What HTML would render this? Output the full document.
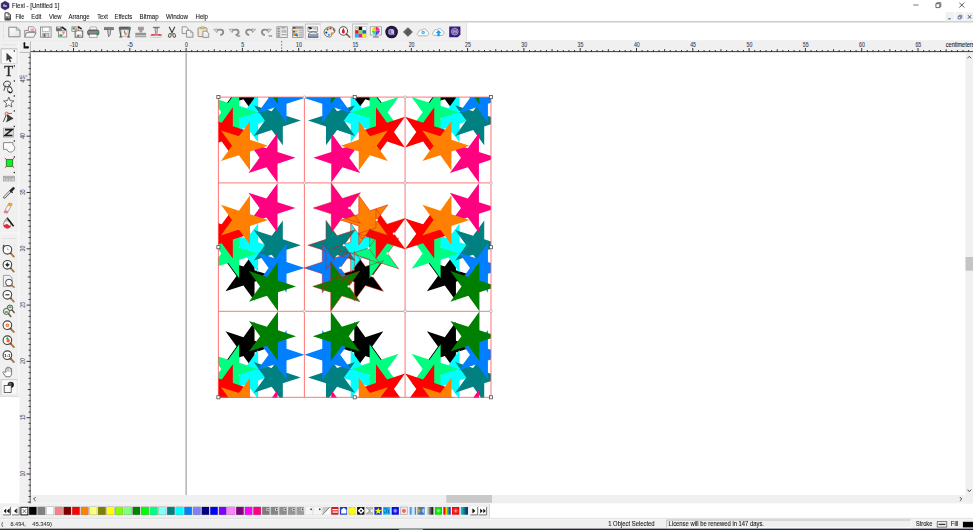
<!DOCTYPE html>
<html><head><meta charset="utf-8"><title>Flexi - [Untitled 1]</title>
<style>html,body{margin:0;padding:0;background:#fff;overflow:hidden;font-family:"Liberation Sans",sans-serif}svg{display:block}</style>
</head><body>
<svg width="973" height="530" viewBox="0 0 973 530" font-family="Liberation Sans, sans-serif">
<rect x="0.00" y="0.00" width="973.00" height="530.00" fill="#ffffff" />
<rect x="0.00" y="22.40" width="466.70" height="18.40" fill="#f0f0f0" />
<rect x="0.00" y="20.90" width="973.00" height="1.70" fill="#d9d9d9" />
<line x1="0.00" y1="21.70" x2="973.00" y2="21.70" stroke="#cbcbcb" stroke-width="0.8" />
<line x1="0.00" y1="40.90" x2="973.00" y2="40.90" stroke="#e3e3e3" stroke-width="0.8" />
<line x1="466.70" y1="22.50" x2="466.70" y2="40.50" stroke="#dcdcdc" stroke-width="0.8" />
<rect x="0.00" y="41.00" width="19.50" height="355.50" fill="#f0f0f0" />
<line x1="0.00" y1="396.50" x2="19.50" y2="396.50" stroke="#d8d8d8" stroke-width="0.8" />
<rect x="19.50" y="41.00" width="953.50" height="11.60" fill="#f0f0f0" />
<rect x="19.50" y="41.00" width="11.00" height="462.30" fill="#f0f0f0" />
<rect x="965.50" y="52.60" width="7.50" height="450.80" fill="#f0f0f0" />
<rect x="30.50" y="495.00" width="942.50" height="8.40" fill="#f0f0f0" />
<rect x="965.50" y="257.00" width="7.50" height="13.70" fill="#c4c4c4" />
<rect x="446.30" y="495.00" width="45.70" height="7.80" fill="#c9c9c9" />
<rect x="0.00" y="503.40" width="489.50" height="14.80" fill="#f0f0f0" />
<line x1="489.50" y1="504.00" x2="489.50" y2="518.00" stroke="#cfcfcf" stroke-width="0.8" />
<rect x="0.00" y="518.40" width="973.00" height="10.40" fill="#f0f0f0" />
<line x1="0.00" y1="518.40" x2="973.00" y2="518.40" stroke="#d9d9d9" stroke-width="0.8" />
<line x1="0.00" y1="519.30" x2="973.00" y2="519.30" stroke="#f6f6f6" stroke-width="0.8" />
<linearGradient id="tb" x1="0" x2="1" y1="0" y2="0"><stop offset="0" stop-color="#2c3a34"/><stop offset="0.5" stop-color="#1c2e38"/><stop offset="1" stop-color="#1a2440"/></linearGradient>
<rect x="0.00" y="528.60" width="973.00" height="1.40" fill="url(#tb)" />
<rect x="399.00" y="529.10" width="24.00" height="0.90" fill="#aab0b6" />
<line x1="30.30" y1="51.60" x2="973.00" y2="51.60" stroke="#404040" stroke-width="1.0" />
<path d="M34.09 52.0v-2.0 M39.72 52.0v-2.0 M45.35 52.0v-2.8 M50.98 52.0v-2.0 M56.61 52.0v-2.0 M62.24 52.0v-2.0 M67.87 52.0v-2.0 M73.50 52.0v-4.0 M79.13 52.0v-2.0 M84.76 52.0v-2.0 M90.39 52.0v-2.0 M96.02 52.0v-2.0 M101.65 52.0v-2.8 M107.28 52.0v-2.0 M112.91 52.0v-2.0 M118.54 52.0v-2.0 M124.17 52.0v-2.0 M129.80 52.0v-4.0 M135.43 52.0v-2.0 M141.06 52.0v-2.0 M146.69 52.0v-2.0 M152.32 52.0v-2.0 M157.95 52.0v-2.8 M163.58 52.0v-2.0 M169.21 52.0v-2.0 M174.84 52.0v-2.0 M180.47 52.0v-2.0 M186.10 52.0v-4.0 M191.73 52.0v-2.0 M197.36 52.0v-2.0 M202.99 52.0v-2.0 M208.62 52.0v-2.0 M214.25 52.0v-2.8 M219.88 52.0v-2.0 M225.51 52.0v-2.0 M231.14 52.0v-2.0 M236.77 52.0v-2.0 M242.40 52.0v-4.0 M248.03 52.0v-2.0 M253.66 52.0v-2.0 M259.29 52.0v-2.0 M264.92 52.0v-2.0 M270.55 52.0v-2.8 M276.18 52.0v-2.0 M281.81 52.0v-2.0 M287.44 52.0v-2.0 M293.07 52.0v-2.0 M298.70 52.0v-4.0 M304.33 52.0v-2.0 M309.96 52.0v-2.0 M315.59 52.0v-2.0 M321.22 52.0v-2.0 M326.85 52.0v-2.8 M332.48 52.0v-2.0 M338.11 52.0v-2.0 M343.74 52.0v-2.0 M349.37 52.0v-2.0 M355.00 52.0v-4.0 M360.63 52.0v-2.0 M366.26 52.0v-2.0 M371.89 52.0v-2.0 M377.52 52.0v-2.0 M383.15 52.0v-2.8 M388.78 52.0v-2.0 M394.41 52.0v-2.0 M400.04 52.0v-2.0 M405.67 52.0v-2.0 M411.30 52.0v-4.0 M416.93 52.0v-2.0 M422.56 52.0v-2.0 M428.19 52.0v-2.0 M433.82 52.0v-2.0 M439.45 52.0v-2.8 M445.08 52.0v-2.0 M450.71 52.0v-2.0 M456.34 52.0v-2.0 M461.97 52.0v-2.0 M467.60 52.0v-4.0 M473.23 52.0v-2.0 M478.86 52.0v-2.0 M484.49 52.0v-2.0 M490.12 52.0v-2.0 M495.75 52.0v-2.8 M501.38 52.0v-2.0 M507.01 52.0v-2.0 M512.64 52.0v-2.0 M518.27 52.0v-2.0 M523.90 52.0v-4.0 M529.53 52.0v-2.0 M535.16 52.0v-2.0 M540.79 52.0v-2.0 M546.42 52.0v-2.0 M552.05 52.0v-2.8 M557.68 52.0v-2.0 M563.31 52.0v-2.0 M568.94 52.0v-2.0 M574.57 52.0v-2.0 M580.20 52.0v-4.0 M585.83 52.0v-2.0 M591.46 52.0v-2.0 M597.09 52.0v-2.0 M602.72 52.0v-2.0 M608.35 52.0v-2.8 M613.98 52.0v-2.0 M619.61 52.0v-2.0 M625.24 52.0v-2.0 M630.87 52.0v-2.0 M636.50 52.0v-4.0 M642.13 52.0v-2.0 M647.76 52.0v-2.0 M653.39 52.0v-2.0 M659.02 52.0v-2.0 M664.65 52.0v-2.8 M670.28 52.0v-2.0 M675.91 52.0v-2.0 M681.54 52.0v-2.0 M687.17 52.0v-2.0 M692.80 52.0v-4.0 M698.43 52.0v-2.0 M704.06 52.0v-2.0 M709.69 52.0v-2.0 M715.32 52.0v-2.0 M720.95 52.0v-2.8 M726.58 52.0v-2.0 M732.21 52.0v-2.0 M737.84 52.0v-2.0 M743.47 52.0v-2.0 M749.10 52.0v-4.0 M754.73 52.0v-2.0 M760.36 52.0v-2.0 M765.99 52.0v-2.0 M771.62 52.0v-2.0 M777.25 52.0v-2.8 M782.88 52.0v-2.0 M788.51 52.0v-2.0 M794.14 52.0v-2.0 M799.77 52.0v-2.0 M805.40 52.0v-4.0 M811.03 52.0v-2.0 M816.66 52.0v-2.0 M822.29 52.0v-2.0 M827.92 52.0v-2.0 M833.55 52.0v-2.8 M839.18 52.0v-2.0 M844.81 52.0v-2.0 M850.44 52.0v-2.0 M856.07 52.0v-2.0 M861.70 52.0v-4.0 M867.33 52.0v-2.0 M872.96 52.0v-2.0 M878.59 52.0v-2.0 M884.22 52.0v-2.0 M889.85 52.0v-2.8 M895.48 52.0v-2.0 M901.11 52.0v-2.0 M906.74 52.0v-2.0 M912.37 52.0v-2.0 M918.00 52.0v-4.0 M923.63 52.0v-2.0 M929.26 52.0v-2.0 M934.89 52.0v-2.0 M940.52 52.0v-2.0 M946.15 52.0v-2.8 M951.78 52.0v-2.0 M957.41 52.0v-2.0 M963.04 52.0v-2.0 M968.67 52.0v-2.0" stroke="#2c2c2c" stroke-width="0.95" fill="none"/>
<text x="69.80" y="47.00" font-size="6.8" fill="#3b4058" stroke="#3b4058" stroke-width="0.1" text-anchor="start" textLength="8.00" lengthAdjust="spacingAndGlyphs" >-10</text>
<text x="127.20" y="47.00" font-size="6.8" fill="#3b4058" stroke="#3b4058" stroke-width="0.1" text-anchor="start" textLength="5.80" lengthAdjust="spacingAndGlyphs" >-5</text>
<text x="184.95" y="47.00" font-size="6.8" fill="#3b4058" stroke="#3b4058" stroke-width="0.1" text-anchor="start" textLength="2.90" lengthAdjust="spacingAndGlyphs" >0</text>
<text x="241.25" y="47.00" font-size="6.8" fill="#3b4058" stroke="#3b4058" stroke-width="0.1" text-anchor="start" textLength="2.90" lengthAdjust="spacingAndGlyphs" >5</text>
<text x="296.10" y="47.00" font-size="6.8" fill="#3b4058" stroke="#3b4058" stroke-width="0.1" text-anchor="start" textLength="5.80" lengthAdjust="spacingAndGlyphs" >10</text>
<text x="352.40" y="47.00" font-size="6.8" fill="#3b4058" stroke="#3b4058" stroke-width="0.1" text-anchor="start" textLength="5.80" lengthAdjust="spacingAndGlyphs" >15</text>
<text x="408.70" y="47.00" font-size="6.8" fill="#3b4058" stroke="#3b4058" stroke-width="0.1" text-anchor="start" textLength="5.80" lengthAdjust="spacingAndGlyphs" >20</text>
<text x="465.00" y="47.00" font-size="6.8" fill="#3b4058" stroke="#3b4058" stroke-width="0.1" text-anchor="start" textLength="5.80" lengthAdjust="spacingAndGlyphs" >25</text>
<text x="521.30" y="47.00" font-size="6.8" fill="#3b4058" stroke="#3b4058" stroke-width="0.1" text-anchor="start" textLength="5.80" lengthAdjust="spacingAndGlyphs" >30</text>
<text x="577.60" y="47.00" font-size="6.8" fill="#3b4058" stroke="#3b4058" stroke-width="0.1" text-anchor="start" textLength="5.80" lengthAdjust="spacingAndGlyphs" >35</text>
<text x="633.90" y="47.00" font-size="6.8" fill="#3b4058" stroke="#3b4058" stroke-width="0.1" text-anchor="start" textLength="5.80" lengthAdjust="spacingAndGlyphs" >40</text>
<text x="690.20" y="47.00" font-size="6.8" fill="#3b4058" stroke="#3b4058" stroke-width="0.1" text-anchor="start" textLength="5.80" lengthAdjust="spacingAndGlyphs" >45</text>
<text x="746.50" y="47.00" font-size="6.8" fill="#3b4058" stroke="#3b4058" stroke-width="0.1" text-anchor="start" textLength="5.80" lengthAdjust="spacingAndGlyphs" >50</text>
<text x="802.80" y="47.00" font-size="6.8" fill="#3b4058" stroke="#3b4058" stroke-width="0.1" text-anchor="start" textLength="5.80" lengthAdjust="spacingAndGlyphs" >55</text>
<text x="859.10" y="47.00" font-size="6.8" fill="#3b4058" stroke="#3b4058" stroke-width="0.1" text-anchor="start" textLength="5.80" lengthAdjust="spacingAndGlyphs" >60</text>
<text x="915.40" y="47.00" font-size="6.8" fill="#3b4058" stroke="#3b4058" stroke-width="0.1" text-anchor="start" textLength="5.80" lengthAdjust="spacingAndGlyphs" >65</text>
<text x="945.80" y="47.00" font-size="6.5" fill="#222" stroke="#222" stroke-width="0.1" text-anchor="start" textLength="28.60" lengthAdjust="spacingAndGlyphs" >centimeters</text>
<line x1="30.20" y1="52.60" x2="30.20" y2="503.40" stroke="#3a3a3a" stroke-width="0.8" />
<path d="M30.6 502.15h-2.8 M30.6 496.52h-2.0 M30.6 490.89h-2.0 M30.6 485.26h-2.0 M30.6 479.63h-2.0 M30.6 474.00h-4.0 M30.6 468.37h-2.0 M30.6 462.74h-2.0 M30.6 457.11h-2.0 M30.6 451.48h-2.0 M30.6 445.85h-2.8 M30.6 440.22h-2.0 M30.6 434.59h-2.0 M30.6 428.96h-2.0 M30.6 423.33h-2.0 M30.6 417.70h-4.0 M30.6 412.07h-2.0 M30.6 406.44h-2.0 M30.6 400.81h-2.0 M30.6 395.18h-2.0 M30.6 389.55h-2.8 M30.6 383.92h-2.0 M30.6 378.29h-2.0 M30.6 372.66h-2.0 M30.6 367.03h-2.0 M30.6 361.40h-4.0 M30.6 355.77h-2.0 M30.6 350.14h-2.0 M30.6 344.51h-2.0 M30.6 338.88h-2.0 M30.6 333.25h-2.8 M30.6 327.62h-2.0 M30.6 321.99h-2.0 M30.6 316.36h-2.0 M30.6 310.73h-2.0 M30.6 305.10h-4.0 M30.6 299.47h-2.0 M30.6 293.84h-2.0 M30.6 288.21h-2.0 M30.6 282.58h-2.0 M30.6 276.95h-2.8 M30.6 271.32h-2.0 M30.6 265.69h-2.0 M30.6 260.06h-2.0 M30.6 254.43h-2.0 M30.6 248.80h-4.0 M30.6 243.17h-2.0 M30.6 237.54h-2.0 M30.6 231.91h-2.0 M30.6 226.28h-2.0 M30.6 220.65h-2.8 M30.6 215.02h-2.0 M30.6 209.39h-2.0 M30.6 203.76h-2.0 M30.6 198.13h-2.0 M30.6 192.50h-4.0 M30.6 186.87h-2.0 M30.6 181.24h-2.0 M30.6 175.61h-2.0 M30.6 169.98h-2.0 M30.6 164.35h-2.8 M30.6 158.72h-2.0 M30.6 153.09h-2.0 M30.6 147.46h-2.0 M30.6 141.83h-2.0 M30.6 136.20h-4.0 M30.6 130.57h-2.0 M30.6 124.94h-2.0 M30.6 119.31h-2.0 M30.6 113.68h-2.0 M30.6 108.05h-2.8 M30.6 102.42h-2.0 M30.6 96.79h-2.0 M30.6 91.16h-2.0 M30.6 85.53h-2.0 M30.6 79.90h-4.0 M30.6 74.27h-2.0 M30.6 68.64h-2.0 M30.6 63.01h-2.0 M30.6 57.38h-2.0" stroke="#2c2c2c" stroke-width="0.95" fill="none"/>
<text transform="translate(25.0 473.70) rotate(-90)" font-size="6.8" fill="#3b4058" text-anchor="middle" textLength="5.8" lengthAdjust="spacingAndGlyphs">10</text>
<text transform="translate(25.0 417.40) rotate(-90)" font-size="6.8" fill="#3b4058" text-anchor="middle" textLength="5.8" lengthAdjust="spacingAndGlyphs">15</text>
<text transform="translate(25.0 361.10) rotate(-90)" font-size="6.8" fill="#3b4058" text-anchor="middle" textLength="5.8" lengthAdjust="spacingAndGlyphs">20</text>
<text transform="translate(25.0 304.80) rotate(-90)" font-size="6.8" fill="#3b4058" text-anchor="middle" textLength="5.8" lengthAdjust="spacingAndGlyphs">25</text>
<text transform="translate(25.0 248.50) rotate(-90)" font-size="6.8" fill="#3b4058" text-anchor="middle" textLength="5.8" lengthAdjust="spacingAndGlyphs">30</text>
<text transform="translate(25.0 192.20) rotate(-90)" font-size="6.8" fill="#3b4058" text-anchor="middle" textLength="5.8" lengthAdjust="spacingAndGlyphs">35</text>
<text transform="translate(25.0 135.90) rotate(-90)" font-size="6.8" fill="#3b4058" text-anchor="middle" textLength="5.8" lengthAdjust="spacingAndGlyphs">40</text>
<text transform="translate(25.0 79.60) rotate(-90)" font-size="6.8" fill="#3b4058" text-anchor="middle" textLength="5.8" lengthAdjust="spacingAndGlyphs">45</text>
<line x1="19.80" y1="52.40" x2="30.50" y2="52.40" stroke="#a0a0a0" stroke-width="0.7" />
<line x1="30.40" y1="41.50" x2="30.40" y2="52.40" stroke="#a0a0a0" stroke-width="0.7" />
<path d="M23.6 42.8h1.6v3.4h3.2v2.3h-4.8z" fill="#111"/>
<path d="M24.4 41.9l1.3 1.5h-2.6z M29.2 47.3l-1.5 1.3v-2.6z" fill="#111"/>
<line x1="186.10" y1="52.60" x2="186.10" y2="495.00" stroke="#8e8e8e" stroke-width="1.0" />
<path d="M967.4 58.25L969.3 56.349999999999994L971.1999999999999 58.25" stroke="#3a3a3a" stroke-width="0.95" fill="none"/>
<path d="M967.4 489.65000000000003L969.3 491.55L971.1999999999999 489.65000000000003" stroke="#3a3a3a" stroke-width="0.95" fill="none"/>
<path d="M35.550000000000004 497.1L33.65 499L35.550000000000004 500.9" stroke="#3a3a3a" stroke-width="0.95" fill="none"/>
<path d="M959.8499999999999 497.1L961.75 499L959.8499999999999 500.9" stroke="#3a3a3a" stroke-width="0.95" fill="none"/>
<path d="M281.7 41.4V51.4" stroke="#222" stroke-width="0.9" stroke-dasharray="1 2.1" fill="none"/>
<path d="M19.6 76H27.4" stroke="#333" stroke-width="0.9" stroke-dasharray="0.85 0.85" fill="none"/>
<defs>
<clipPath id="ct"><rect x="304.4" y="182.9" width="100.70000000000005" height="128.4"/></clipPath>
<clipPath id="ca"><rect x="218.4" y="97.1" width="272.6" height="300.20000000000005"/></clipPath>
<g id="tile" clip-path="url(#ct)" shape-rendering="geometricPrecision">
<polygon points="372.23,276.00 383.33,260.72 365.37,266.55 354.27,251.27 354.27,270.16 336.30,276.00 354.27,281.84 354.27,300.73 365.37,285.45 383.33,291.28" fill="#000000"/>
<polygon points="368.63,248.00 379.73,232.72 361.77,238.55 350.67,223.27 350.67,242.16 332.70,248.00 350.67,253.84 350.67,272.73 361.77,257.45 379.73,263.28" fill="#00ffff"/>
<polygon points="343.93,245.20 355.03,229.92 337.07,235.75 325.97,220.47 325.97,239.36 308.00,245.20 325.97,251.04 325.97,269.93 337.07,254.65 355.03,260.48" fill="#008080"/>
<polygon points="349.23,208.00 360.33,192.72 342.37,198.55 331.27,183.27 331.27,202.16 313.30,208.00 331.27,213.84 331.27,232.73 342.37,217.45 360.33,223.28" fill="#ff0080"/>
<polygon points="387.53,253.50 398.63,238.22 380.67,244.05 369.57,228.77 369.57,247.66 351.60,253.50 369.57,259.34 369.57,278.23 380.67,262.95 398.63,268.78" fill="#00ff80"/>
<polygon points="393.93,233.70 405.03,218.42 387.07,224.25 375.97,208.97 375.97,227.86 358.00,233.70 375.97,239.54 375.97,258.43 387.07,243.15 405.03,248.98" fill="#ff0000"/>
<polygon points="376.73,220.10 387.83,204.82 369.87,210.65 358.77,195.37 358.77,214.26 340.80,220.10 358.77,225.94 358.77,244.83 369.87,229.55 387.83,235.38" fill="#ff8000"/>
<polygon points="340.23,267.90 351.33,252.62 333.37,258.45 322.27,243.17 322.27,262.06 304.30,267.90 322.27,273.74 322.27,292.63 333.37,277.35 351.33,283.18" fill="#0080ff"/>
<polygon points="348.73,286.40 359.83,271.12 341.87,276.95 330.77,261.67 330.77,280.56 312.80,286.40 330.77,292.24 330.77,311.13 341.87,295.85 359.83,301.68" fill="#008000"/>
</g></defs>
<filter id="ab" x="-2%" y="-2%" width="104%" height="104%"><feGaussianBlur stdDeviation="0.32"/></filter>
<g clip-path="url(#ca)"><g filter="url(#ab)">
<use href="#tile" transform=" "/>
<use href="#tile" transform=" translate(0 365.8) scale(1 -1)"/>
<use href="#tile" transform=" translate(0 622.6) scale(1 -1)"/>
<use href="#tile" transform="translate(608.8 0) scale(-1 1) "/>
<use href="#tile" transform="translate(608.8 0) scale(-1 1) translate(0 365.8) scale(1 -1)"/>
<use href="#tile" transform="translate(608.8 0) scale(-1 1) translate(0 622.6) scale(1 -1)"/>
<use href="#tile" transform="translate(810.2 0) scale(-1 1) "/>
<use href="#tile" transform="translate(810.2 0) scale(-1 1) translate(0 365.8) scale(1 -1)"/>
<use href="#tile" transform="translate(810.2 0) scale(-1 1) translate(0 622.6) scale(1 -1)"/>
</g></g>
<line x1="218.40" y1="97.10" x2="218.40" y2="397.30" stroke="#ff5e5e" stroke-width="0.85" />
<line x1="304.40" y1="97.10" x2="304.40" y2="397.30" stroke="#ff5e5e" stroke-width="0.85" />
<line x1="405.10" y1="97.10" x2="405.10" y2="397.30" stroke="#ff5e5e" stroke-width="0.85" />
<line x1="491.00" y1="97.10" x2="491.00" y2="397.30" stroke="#ff5e5e" stroke-width="0.85" />
<line x1="218.40" y1="97.10" x2="491.00" y2="97.10" stroke="#ff5e5e" stroke-width="0.85" />
<line x1="218.40" y1="182.90" x2="491.00" y2="182.90" stroke="#ff5e5e" stroke-width="0.85" />
<line x1="218.40" y1="311.30" x2="491.00" y2="311.30" stroke="#ff5e5e" stroke-width="0.85" />
<line x1="218.40" y1="397.30" x2="491.00" y2="397.30" stroke="#ff5e5e" stroke-width="0.85" />
<polygon points="372.23,276.00 383.33,260.72 365.37,266.55 354.27,251.27 354.27,270.16 336.30,276.00 354.27,281.84 354.27,300.73 365.37,285.45 383.33,291.28" fill="none" stroke="#d01c10" stroke-width="0.55" stroke-opacity="0.95"/>
<polygon points="368.63,248.00 379.73,232.72 361.77,238.55 350.67,223.27 350.67,242.16 332.70,248.00 350.67,253.84 350.67,272.73 361.77,257.45 379.73,263.28" fill="none" stroke="#d01c10" stroke-width="0.55" stroke-opacity="0.95"/>
<polygon points="343.93,245.20 355.03,229.92 337.07,235.75 325.97,220.47 325.97,239.36 308.00,245.20 325.97,251.04 325.97,269.93 337.07,254.65 355.03,260.48" fill="none" stroke="#d01c10" stroke-width="0.55" stroke-opacity="0.95"/>
<polygon points="349.23,208.00 360.33,192.72 342.37,198.55 331.27,183.27 331.27,202.16 313.30,208.00 331.27,213.84 331.27,232.73 342.37,217.45 360.33,223.28" fill="none" stroke="#d01c10" stroke-width="0.55" stroke-opacity="0.95"/>
<polygon points="387.53,253.50 398.63,238.22 380.67,244.05 369.57,228.77 369.57,247.66 351.60,253.50 369.57,259.34 369.57,278.23 380.67,262.95 398.63,268.78" fill="none" stroke="#d01c10" stroke-width="0.55" stroke-opacity="0.95"/>
<polygon points="393.93,233.70 405.03,218.42 387.07,224.25 375.97,208.97 375.97,227.86 358.00,233.70 375.97,239.54 375.97,258.43 387.07,243.15 405.03,248.98" fill="none" stroke="#d01c10" stroke-width="0.55" stroke-opacity="0.95"/>
<polygon points="376.73,220.10 387.83,204.82 369.87,210.65 358.77,195.37 358.77,214.26 340.80,220.10 358.77,225.94 358.77,244.83 369.87,229.55 387.83,235.38" fill="none" stroke="#d01c10" stroke-width="0.55" stroke-opacity="0.95"/>
<polygon points="340.23,267.90 351.33,252.62 333.37,258.45 322.27,243.17 322.27,262.06 304.30,267.90 322.27,273.74 322.27,292.63 333.37,277.35 351.33,283.18" fill="none" stroke="#d01c10" stroke-width="0.55" stroke-opacity="0.95"/>
<polygon points="348.73,286.40 359.83,271.12 341.87,276.95 330.77,261.67 330.77,280.56 312.80,286.40 330.77,292.24 330.77,311.13 341.87,295.85 359.83,301.68" fill="none" stroke="#d01c10" stroke-width="0.55" stroke-opacity="0.95"/>
<circle cx="372.23" cy="276.00" r="1.15" fill="#fff" stroke="#aaa" stroke-width="0.3"/>
<circle cx="368.63" cy="248.00" r="1.15" fill="#fff" stroke="#aaa" stroke-width="0.3"/>
<circle cx="343.93" cy="245.20" r="1.15" fill="#fff" stroke="#aaa" stroke-width="0.3"/>
<circle cx="349.23" cy="208.00" r="1.15" fill="#fff" stroke="#aaa" stroke-width="0.3"/>
<circle cx="387.53" cy="253.50" r="1.15" fill="#fff" stroke="#aaa" stroke-width="0.3"/>
<circle cx="393.93" cy="233.70" r="1.15" fill="#fff" stroke="#aaa" stroke-width="0.3"/>
<circle cx="376.73" cy="220.10" r="1.15" fill="#fff" stroke="#aaa" stroke-width="0.3"/>
<circle cx="340.23" cy="267.90" r="1.15" fill="#fff" stroke="#aaa" stroke-width="0.3"/>
<circle cx="348.73" cy="286.40" r="1.15" fill="#fff" stroke="#aaa" stroke-width="0.3"/>
<circle cx="304.4" cy="97.1" r="1.4" fill="#e8f6f6" stroke="#a0a0a0" stroke-width="0.55"/>
<circle cx="304.4" cy="182.9" r="1.4" fill="#e8f6f6" stroke="#a0a0a0" stroke-width="0.55"/>
<circle cx="304.4" cy="311.3" r="1.4" fill="#e8f6f6" stroke="#a0a0a0" stroke-width="0.55"/>
<circle cx="405.1" cy="97.1" r="1.4" fill="#e8f6f6" stroke="#a0a0a0" stroke-width="0.55"/>
<circle cx="405.1" cy="182.9" r="1.4" fill="#e8f6f6" stroke="#a0a0a0" stroke-width="0.55"/>
<circle cx="405.1" cy="311.3" r="1.4" fill="#e8f6f6" stroke="#a0a0a0" stroke-width="0.55"/>
<circle cx="491.0" cy="182.9" r="1.4" fill="#e8f6f6" stroke="#a0a0a0" stroke-width="0.55"/>
<circle cx="491.0" cy="311.3" r="1.4" fill="#e8f6f6" stroke="#a0a0a0" stroke-width="0.55"/>
<rect x="216.85" y="95.55" width="3.1" height="3.1" fill="#fff" stroke="#505050" stroke-width="0.8"/>
<rect x="353.15" y="95.55" width="3.1" height="3.1" fill="#fff" stroke="#505050" stroke-width="0.8"/>
<rect x="489.45" y="95.55" width="3.1" height="3.1" fill="#fff" stroke="#505050" stroke-width="0.8"/>
<rect x="216.85" y="245.65" width="3.1" height="3.1" fill="#fff" stroke="#505050" stroke-width="0.8"/>
<rect x="489.45" y="245.65" width="3.1" height="3.1" fill="#fff" stroke="#505050" stroke-width="0.8"/>
<rect x="216.85" y="395.75" width="3.1" height="3.1" fill="#fff" stroke="#505050" stroke-width="0.8"/>
<rect x="353.15" y="395.75" width="3.1" height="3.1" fill="#fff" stroke="#505050" stroke-width="0.8"/>
<rect x="489.45" y="395.75" width="3.1" height="3.1" fill="#fff" stroke="#505050" stroke-width="0.8"/>
<path d="M5.1 1.2l3.900 2.200v4.400l-3.900 2.200l-3.900-2.200v-4.400z" fill="#3a2870" stroke="#3a2870" stroke-width="0.6" stroke-linejoin="round" filter="url(#bl)"/>
<text x="5.10" y="7.30" font-size="4.2" fill="#e8e4f6" stroke="#e8e4f6" stroke-width="0.1" text-anchor="middle" font-weight="bold">fx</text>
<text x="12.00" y="7.90" font-size="6.5" fill="#1c1c1c" stroke="#1c1c1c" stroke-width="0.1" text-anchor="start" textLength="47.40" lengthAdjust="spacingAndGlyphs" >Flexi - [Untitled 1]</text>
<line x1="913.20" y1="5.00" x2="918.60" y2="5.00" stroke="#444" stroke-width="0.7" />
<path d="M935.9 3.7h3.9v3.9h-3.9z M936.9 3.7v-1h3.9v3.9h-1" fill="none" stroke="#333" stroke-width="0.7"/>
<path d="M959.3 2.6l5 5M964.3 2.6l-5 5" fill="none" stroke="#333" stroke-width="0.8"/>
<path d="M5 12.800h3.400l2 2v5.200h-5.400z" fill="#fff" stroke="#222" stroke-width="0.9"/>
<path d="M8.200 12.800v2.200h2.200" fill="none" stroke="#222" stroke-width="0.6"/>
<path d="M5.600 16.600h4.200v3.200h-4.200z" fill="#333"/><path d="M6.300 17.200h1.200v1h-1.200zM8 17.200h1.200v1h-1.200z" fill="#ddd"/>
<text x="15.50" y="18.70" font-size="6.5" fill="#1c1c1c" stroke="#1c1c1c" stroke-width="0.1" text-anchor="start" textLength="8.80" lengthAdjust="spacingAndGlyphs" >File</text>
<text x="31.30" y="18.70" font-size="6.5" fill="#1c1c1c" stroke="#1c1c1c" stroke-width="0.1" text-anchor="start" textLength="10.10" lengthAdjust="spacingAndGlyphs" >Edit</text>
<text x="48.90" y="18.70" font-size="6.5" fill="#1c1c1c" stroke="#1c1c1c" stroke-width="0.1" text-anchor="start" textLength="12.50" lengthAdjust="spacingAndGlyphs" >View</text>
<text x="68.40" y="18.70" font-size="6.5" fill="#1c1c1c" stroke="#1c1c1c" stroke-width="0.1" text-anchor="start" textLength="21.30" lengthAdjust="spacingAndGlyphs" >Arrange</text>
<text x="97.20" y="18.70" font-size="6.5" fill="#1c1c1c" stroke="#1c1c1c" stroke-width="0.1" text-anchor="start" textLength="10.60" lengthAdjust="spacingAndGlyphs" >Text</text>
<text x="114.50" y="18.70" font-size="6.5" fill="#1c1c1c" stroke="#1c1c1c" stroke-width="0.1" text-anchor="start" textLength="17.80" lengthAdjust="spacingAndGlyphs" >Effects</text>
<text x="139.60" y="18.70" font-size="6.5" fill="#1c1c1c" stroke="#1c1c1c" stroke-width="0.1" text-anchor="start" textLength="19.00" lengthAdjust="spacingAndGlyphs" >Bitmap</text>
<text x="165.90" y="18.70" font-size="6.5" fill="#1c1c1c" stroke="#1c1c1c" stroke-width="0.1" text-anchor="start" textLength="22.10" lengthAdjust="spacingAndGlyphs" >Window</text>
<text x="195.50" y="18.70" font-size="6.5" fill="#1c1c1c" stroke="#1c1c1c" stroke-width="0.1" text-anchor="start" textLength="12.50" lengthAdjust="spacingAndGlyphs" >Help</text>
<rect x="945.60" y="12.20" width="8.60" height="9.00" fill="#f0f0f0" />
<rect x="955.40" y="12.20" width="8.60" height="9.00" fill="#f0f0f0" />
<rect x="965.20" y="12.20" width="8.60" height="9.00" fill="#f0f0f0" />
<line x1="948.20" y1="18.80" x2="950.60" y2="18.80" stroke="#2a3f7a" stroke-width="0.9" />
<path d="M958.2 16.3h2.6v2.6h-2.6z M959.2 16.3v-1h2.6v2.6h-1" fill="none" stroke="#2a3f7a" stroke-width="0.6"/>
<path d="M968 15.2l3.2 3.4M971.2 15.2l-3.2 3.4" fill="none" stroke="#2a3f7a" stroke-width="0.9"/>
<text x="1.20" y="526.40" font-size="6.1" fill="#3a3a3a" stroke="#3a3a3a" stroke-width="0.1" text-anchor="start" >(</text>
<text x="10.50" y="526.40" font-size="6.1" fill="#3a3a3a" stroke="#3a3a3a" stroke-width="0.1" text-anchor="start" textLength="15.30" lengthAdjust="spacingAndGlyphs" >8.494,</text>
<text x="32.20" y="526.40" font-size="6.1" fill="#3a3a3a" stroke="#3a3a3a" stroke-width="0.1" text-anchor="start" textLength="19.80" lengthAdjust="spacingAndGlyphs" >45.349)</text>
<text x="608.20" y="526.40" font-size="6.3" fill="#222" stroke="#222" stroke-width="0.1" text-anchor="start" textLength="46.40" lengthAdjust="spacingAndGlyphs" >1 Object Selected</text>
<path d="M666.7 527.6v-7.6h244.2" fill="none" stroke="#a8a8a8" stroke-width="0.7"/>
<path d="M666.7 527.6h244.2v-7.6" fill="none" stroke="#fff" stroke-width="0.7"/>
<text x="668.60" y="526.40" font-size="6.3" fill="#222" stroke="#222" stroke-width="0.1" text-anchor="start" textLength="95.40" lengthAdjust="spacingAndGlyphs" >License will be renewed in 147 days.</text>
<text x="915.90" y="526.40" font-size="6.3" fill="#222" stroke="#222" stroke-width="0.1" text-anchor="start" textLength="16.40" lengthAdjust="spacingAndGlyphs" >Stroke</text>
<rect x="937.2" y="521.7" width="9.6" height="5.4" fill="#f4f4f4" stroke="#444" stroke-width="0.7"/>
<line x1="938.60" y1="524.40" x2="945.40" y2="524.40" stroke="#333" stroke-width="1.3" />
<text x="950.80" y="526.40" font-size="6.3" fill="#222" stroke="#222" stroke-width="0.1" text-anchor="start" textLength="7.60" lengthAdjust="spacingAndGlyphs" >Fill</text>
<rect x="962.90" y="521.80" width="10.10" height="5.60" fill="#000" />
<defs><filter id="bl" x="-10%" y="-10%" width="120%" height="120%"><feGaussianBlur stdDeviation="0.35"/></filter><linearGradient id="pg" x1="0" y1="0" x2="1" y2="1"><stop offset="0" stop-color="#fdfdfd"/><stop offset="1" stop-color="#dfe3ea"/></linearGradient><radialGradient id="prp"><stop offset="0" stop-color="#7a5fb8"/><stop offset="0.6" stop-color="#3a2470"/><stop offset="1" stop-color="#22143f"/></radialGradient></defs>
<path d="M3.4 25v13.5" stroke="#c4c4c4" stroke-width="0.8" stroke-dasharray="0.8 1.2" fill="none"/>
<g transform="translate(8.50 26.20)" filter="url(#bl)"><path d="M0.3 1h7.6l3.6 3v6.6h-11.2z" fill="url(#pg)" stroke="#7d7d7d" stroke-width="0.9"/><path d="M7.9 1v3h3.6" fill="none" stroke="#7d7d7d" stroke-width="0.6"/></g>
<g transform="translate(24.25 26.20)" filter="url(#bl)"><path d="M4.2 0.6h4.6l2.6 2.4v5h-7.2z" fill="#fff" stroke="#7d7d7d" stroke-width="0.8"/><rect x="6.3" y="2.4" width="3.6" height="2.2" fill="#ff8fa0"/><rect x="8" y="4.8" width="2.4" height="1.8" fill="#3fb765"/><path d="M0.4 4.2h3.4l1 1.2h4.8v1.2h-7.4l-1.6 4.4z" fill="#e8e8e8" stroke="#7d7d7d" stroke-width="0.8"/><path d="M0.5 11l1.9-4.6h9.2l-2 4.6z" fill="#f6f6f6" stroke="#7d7d7d" stroke-width="0.8"/></g>
<g transform="translate(40.00 26.20)" filter="url(#bl)"><rect x="0.5" y="0.8" width="10.6" height="10.2" fill="#ececec" stroke="#8c8c8c" stroke-width="0.9"/><rect x="2.4" y="1" width="6.8" height="4.2" fill="#fff" stroke="#999" stroke-width="0.6"/><rect x="2.8" y="7.2" width="6" height="3.8" fill="#d0d0d0" stroke="#888" stroke-width="0.6"/><rect x="3.6" y="7.8" width="1.8" height="2.8" fill="#666"/></g>
<g transform="translate(55.75 26.20)" filter="url(#bl)"><rect x="0.4" y="0.4" width="5.6" height="4.6" fill="#666"/><rect x="1.6" y="0.4" width="3" height="1.8" fill="#ddd"/><path d="M6 0.8l4.4 3.2" stroke="#222" stroke-width="1.6"/><rect x="2.8" y="4.6" width="8.2" height="6.2" fill="#f4f4f4" stroke="#7d7d7d" stroke-width="0.8"/><path d="M6 5.2l3.4 0.4-1.6 3.2z" fill="#ff7d8a"/><path d="M3.6 8l3.2 0.2-0.4 2.2-2.8-0.4z" fill="#1faa4b"/></g>
<g transform="translate(71.50 26.20)" filter="url(#bl)"><rect x="0.4" y="0.6" width="6.8" height="4.6" fill="#e8e8e8" stroke="#7d7d7d" stroke-width="0.7"/><rect x="1" y="1.2" width="2.6" height="2" fill="#2eaa55"/><rect x="3.2" y="1.6" width="3" height="2.6" fill="#ff8c98"/><path d="M6.6 0.4l3.6 2.6" stroke="#222" stroke-width="1.5"/><rect x="3.6" y="4.8" width="7.6" height="6.2" fill="#e4e4e4" stroke="#666" stroke-width="1"/><rect x="5.2" y="5.2" width="4.4" height="2.4" fill="#fff"/><rect x="5.4" y="8.4" width="4" height="2.6" fill="#bdbdbd"/><rect x="6" y="8.8" width="1.2" height="2" fill="#555"/></g>
<g transform="translate(87.25 26.20)" filter="url(#bl)"><path d="M3 0.8h6l0.8 3.2h-7.6z" fill="#fafafa" stroke="#999" stroke-width="0.7"/><rect x="0.4" y="3.8" width="11.2" height="5" rx="1.6" fill="#6b7078" stroke="#4b4f55" stroke-width="0.8"/><rect x="0.8" y="5.2" width="10.4" height="1.4" fill="#8e949c"/><rect x="8.8" y="5.6" width="1.6" height="1.2" fill="#19c24a"/><path d="M2.6 8h6.8l0.6 3.2h-8z" fill="#fff" stroke="#888" stroke-width="0.7"/></g>
<g transform="translate(103.00 26.20)" filter="url(#bl)"><rect x="1.6" y="1" width="8.8" height="1.6" fill="#8a8a8a" stroke="#666" stroke-width="0.5"/><path d="M1 3.2h10" stroke="#555" stroke-width="0.9"/><path d="M4.4 3.4h3.4l-0.6 5-1.6 2.2z" fill="#eee" stroke="#666" stroke-width="0.8"/><path d="M6 4v5" stroke="#777" stroke-width="0.6"/></g>
<g transform="translate(118.75 26.20)" filter="url(#bl)"><rect x="0.4" y="0.8" width="11.2" height="2.6" rx="0.6" fill="#666" stroke="#444" stroke-width="0.6"/><rect x="9.6" y="1.2" width="1.4" height="1.2" fill="#2ec45a"/><path d="M1 3.4l1.2 7.2M11 3.4l-1.2 7.2" stroke="#555" stroke-width="1.2"/><rect x="2.8" y="3.6" width="6.4" height="6.4" fill="#f6f6f6" stroke="#999" stroke-width="0.5"/><rect x="5.2" y="4.4" width="1.2" height="2.4" fill="#23a64b"/><rect x="5.8" y="6.4" width="2" height="2.6" fill="#ff6f7d"/><path d="M0.6 10.8h3M8.4 10.8h3" stroke="#444" stroke-width="0.9"/></g>
<g transform="translate(134.50 26.20)" filter="url(#bl)"><path d="M3.400 0.600h6v3.200l-1.600 0.600v2h-2.800v-2l-1.600-0.600z" fill="#9c9c9c"/><rect x="0.800" y="6.600" width="10.800" height="2.600" fill="#949494"/><rect x="0.600" y="9.600" width="11.200" height="1.500" fill="#a6a6a6"/></g>
<g transform="translate(150.25 26.20)" filter="url(#bl)"><rect x="2.6" y="0.6" width="6.8" height="1.3" fill="#777"/><path d="M4.8 2h2.4l-0.5 5.6-0.7 1.2-0.7-1.2z" fill="#ddd" stroke="#666" stroke-width="0.7"/><path d="M0.6 8.2q2.6-1.2 5 0.4v1.2h-5z" fill="#f0283c"/><path d="M11.4 8.2q-2.6-1.2-5 0.4v1.2h5z" fill="#f0283c"/><rect x="0.6" y="9.6" width="10.8" height="1.4" fill="#e8eef5" stroke="#9ab" stroke-width="0.4"/></g>
<g transform="translate(166.00 26.20)" filter="url(#bl)"><path d="M3.2 0.6l3.2 6.6M8.8 0.6l-3.2 6.6" stroke="#3c3c3c" stroke-width="1.1" fill="none"/><ellipse cx="3.8" cy="9.2" rx="1.3" ry="1.9" transform="rotate(25 3.8 9.2)" fill="none" stroke="#5a5550" stroke-width="1"/><ellipse cx="8.2" cy="9.2" rx="1.3" ry="1.9" transform="rotate(-25 8.2 9.2)" fill="none" stroke="#5a5550" stroke-width="1"/></g>
<g transform="translate(181.75 26.20)" filter="url(#bl)"><path d="M0.4 0.6h4l2.2 2v4.8h-6.2z" fill="url(#pg)" stroke="#7d7d7d" stroke-width="0.8"/><path d="M4.8 4.2h4l2.4 2.2v4.6h-6.4z" fill="url(#pg)" stroke="#7d7d7d" stroke-width="0.8"/><path d="M8.8 4.2v2.2h2.4" fill="none" stroke="#7d7d7d" stroke-width="0.5"/></g>
<g transform="translate(197.50 26.20)" filter="url(#bl)"><rect x="0.6" y="1.6" width="8.8" height="8.8" rx="0.8" fill="#f2e6d2" stroke="#8b8378" stroke-width="0.9"/><rect x="3" y="0.6" width="4" height="2" rx="0.6" fill="#d8d84a" stroke="#887" stroke-width="0.5"/><path d="M5.4 5h3.6l2.2 2v4.2h-5.8z" fill="url(#pg)" stroke="#7d7d7d" stroke-width="0.8"/></g>
<g transform="translate(213.45 26.40)" filter="url(#bl)"><path d="M3 4.6C5 2.6 9.8 2.6 9.8 5.6C9.8 7.4 8.2 8.4 6.8 8.8" fill="none" stroke="#8c8c8c" stroke-width="1.8"/><path d="M0.4 3l3.600-0.400-0.600 3.600z" fill="#ececec" stroke="#8a8a8a" stroke-width="0.7"/></g>
<g transform="translate(228.80 26.40)" filter="url(#bl)"><path d="M3 4.6C5 2.6 9.8 2.6 9.8 5.6C9.8 7.4 8.2 8.4 6.8 8.8" fill="none" stroke="#8c8c8c" stroke-width="1.8"/><path d="M0.4 3l3.600-0.400-0.600 3.600z" fill="#ececec" stroke="#8a8a8a" stroke-width="0.7"/><path d="M8 9.600h3.400" stroke="#777" stroke-width="1.1"/></g>
<g transform="translate(244.95 26.40)" filter="url(#bl)"><g transform="translate(11 0) scale(-1 1)"><path d="M3 4.6C5 2.6 9.8 2.6 9.8 5.6C9.8 7.4 8.2 8.4 6.8 8.8" fill="none" stroke="#8c8c8c" stroke-width="1.8"/><path d="M0.4 3l3.600-0.400-0.600 3.600z" fill="#ececec" stroke="#8a8a8a" stroke-width="0.7"/></g></g>
<g transform="translate(260.70 26.40)" filter="url(#bl)"><g transform="translate(11 0) scale(-1 1)"><path d="M3 4.6C5 2.6 9.8 2.6 9.8 5.6C9.8 7.4 8.2 8.4 6.8 8.8" fill="none" stroke="#8c8c8c" stroke-width="1.8"/><path d="M0.4 3l3.600-0.400-0.600 3.600z" fill="#ececec" stroke="#8a8a8a" stroke-width="0.7"/></g><path d="M8 9.600h3.400" stroke="#777" stroke-width="1.1"/></g>
<g transform="translate(276.25 26.20)" filter="url(#bl)"><rect x="0.6" y="0.6" width="10.4" height="10.6" fill="#efefef" stroke="#8a8a8a" stroke-width="0.8"/><rect x="0.8" y="0.8" width="3.4" height="10.2" fill="#c9c9c9"/><path d="M1.4 2.4h2M1.4 5h2M1.4 7.6h2M1.4 9.8h2" stroke="#666" stroke-width="0.8"/><rect x="5.2" y="3.6" width="5" height="3" fill="#bbb"/><rect x="5.2" y="8" width="5" height="1" fill="#999"/><rect x="5" y="0.8" width="4" height="1.6" fill="#aaa"/></g>
<g transform="translate(292.00 26.20)" filter="url(#bl)"><rect x="0.6" y="0.6" width="10.4" height="10.6" fill="#efefef" stroke="#8a8a8a" stroke-width="0.8"/><rect x="1" y="0.8" width="9.6" height="1.8" fill="#9a9a9a"/><rect x="1" y="1" width="2.4" height="1.4" fill="#444"/><rect x="1.2" y="4.4" width="1.6" height="2" fill="#333"/><rect x="3" y="3.6" width="2.6" height="2.6" fill="#ffb24a"/><rect x="1" y="7" width="2.2" height="2.8" fill="#ff8a00"/><rect x="3.2" y="7.2" width="2.2" height="2.6" fill="#1f7fd1"/><rect x="4.4" y="8.4" width="1.6" height="1.8" fill="#1c9a4a"/><path d="M6.6 4h3.8M6.6 6h3.8M6.6 8h3.8M6.6 9.8h3.8" stroke="#999" stroke-width="0.9"/></g>
<rect x="305.4" y="24" width="15.2" height="15.2" fill="#f5f5f5" stroke="#dedede" stroke-width="0.7"/><path d="M305.4 39.2v-15.200h15.200" fill="none" stroke="#bcbcbc" stroke-width="0.8"/>
<g transform="translate(307.15 26.20)" filter="url(#bl)"><rect x="0.8" y="0.8" width="9.6" height="4.4" fill="#f4f4f4" stroke="#8a8a8a" stroke-width="0.8"/><path d="M0.8 0.8h3l1.6 1.8-3 0.6z" fill="#333"/><rect x="6" y="1.4" width="4" height="2.2" fill="#c8c8c8"/><path d="M1.4 7.4q4.6-3.6 9.2 0v3.4h-9.2z" fill="#e8e8e8" stroke="#666" stroke-width="0.9"/><rect x="2" y="7.8" width="8" height="2.8" fill="#8aa0c4"/><path d="M0.6 11h10.8" stroke="#555" stroke-width="0.9"/></g>
<g transform="translate(323.50 26.20)" filter="url(#bl)"><path d="M6 0.8c3.4-0.4 5.6 1.6 5.4 4.2c-0.2 1.8-1.4 2-2.4 1.8c-1.2-0.2-1.6 0.6-1.2 1.6c0.6 1.6-0.6 2.6-2.4 2.4c-3-0.2-5-2.4-4.8-5.200c0.200-2.600 2.400-4.600 5.400-4.800z" fill="#f3ece0" stroke="#6a655f" stroke-width="0.9"/><circle cx="4" cy="3.2" r="1.1" fill="#14923a"/><circle cx="7" cy="2.200" r="1.1" fill="#e02020"/><circle cx="2.8" cy="6.4" r="1.1" fill="#2332b8"/><circle cx="5.4" cy="8.600" r="1.1" fill="#19b2ee"/><circle cx="8.6" cy="7.600" r="1.1" fill="#ff8c1a"/><path d="M9.400 2.200l1.800 3" stroke="#555" stroke-width="1.1"/></g>
<g transform="translate(338.55 26.20)" filter="url(#bl)"><circle cx="4.8" cy="4.8" r="4.200" fill="#fff" stroke="#555" stroke-width="1.1"/><path d="M4.8 1.8q2 2.800 1.500 4.200q-0.500 1.200-1.500 1.200q-1-0-1.500-1.200q-0.500-1.400 1.500-4.200z" fill="#e0141e"/><path d="M7.800 7.800l3.400 3.200" stroke="#9a6a3a" stroke-width="1.700" stroke-linecap="round"/><path d="M7.600 7.600l1.200 1.200" stroke="#555" stroke-width="1.300"/></g>
<rect x="352.6" y="24" width="15.2" height="15.2" fill="#f5f5f5" stroke="#dedede" stroke-width="0.7"/><path d="M352.6 39.2v-15.200h15.200" fill="none" stroke="#bcbcbc" stroke-width="0.8"/>
<g transform="translate(354.60 26.20)" filter="url(#bl)"><rect x="0.40" y="0.40" width="3.7" height="3.6" fill="#e8e8e8"/><rect x="4.10" y="0.40" width="3.7" height="3.6" fill="#111"/><rect x="7.80" y="0.40" width="3.7" height="3.6" fill="#fff"/><rect x="0.40" y="4.00" width="3.7" height="3.6" fill="#f01818"/><rect x="4.10" y="4.00" width="3.7" height="3.6" fill="#7be23a"/><rect x="7.80" y="4.00" width="3.7" height="3.6" fill="#1668c8"/><rect x="0.40" y="7.60" width="3.7" height="3.6" fill="#19b8f0"/><rect x="4.10" y="7.60" width="3.7" height="3.6" fill="#f0149a"/><rect x="7.80" y="7.60" width="3.7" height="3.6" fill="#f4ec10"/><rect x="0.4" y="0.4" width="11.100" height="10.8" fill="none" stroke="#999" stroke-width="0.4"/><path d="M0.800 0.800l2.600 2.600M3.400 0.800l-2.600 2.600" stroke="#888" stroke-width="0.5"/></g>
<g transform="translate(369.85 26.20)" filter="url(#bl)"><rect x="0.4" y="0.6" width="11.200" height="8.200" fill="#f4f4f4" stroke="#9a9a9a" stroke-width="0.8"/><path d="M6 4.600L6.00 0.70A3.9 3.9 0 0 1 8.76 1.84z" fill="#ff2020"/><path d="M6 4.600L8.76 1.84A3.9 3.9 0 0 1 9.90 4.60z" fill="#ff20a0"/><path d="M6 4.600L9.90 4.60A3.9 3.9 0 0 1 8.76 7.36z" fill="#a020e0"/><path d="M6 4.600L8.76 7.36A3.9 3.9 0 0 1 6.00 8.50z" fill="#2050ff"/><path d="M6 4.600L6.00 8.50A3.9 3.9 0 0 1 3.24 7.36z" fill="#10d8d8"/><path d="M6 4.600L3.24 7.36A3.9 3.9 0 0 1 2.10 4.60z" fill="#30e030"/><path d="M6 4.600L2.10 4.60A3.9 3.9 0 0 1 3.24 1.84z" fill="#c8f000"/><path d="M6 4.600L3.24 1.84A3.9 3.9 0 0 1 6.00 0.70z" fill="#ffb000"/><path d="M5 8.800h2v1.400h-2z" fill="#999"/><path d="M3 10.800h6" stroke="#666" stroke-width="1"/></g>
<g transform="translate(385.60 26.20)" filter="url(#bl)"><circle cx="6" cy="5.800" r="6.300" fill="#1d1230"/><circle cx="6" cy="5.800" r="5" fill="url(#prp)"/><rect x="3.400" y="3.600" width="4.400" height="4.200" rx="0.500" fill="none" stroke="#efeaf8" stroke-width="0.9"/><path d="M5.600 4.400h1.600l0.200 1.600-1.800 0.200zM6.800 6.200l1.800 2.400" stroke="#efeaf8" stroke-width="0.7" fill="none"/></g>
<clipPath id="dm"><path d="M6 1l4.800 4.800-4.800 4.800-4.800-4.800z"/></clipPath>
<g transform="translate(401.95 26.20)" filter="url(#bl)"><g clip-path="url(#dm)"><rect x="0" y="0" width="12" height="12" fill="#c4c4c4"/><path d="M-3.60 10.80L6.40 0.80" stroke="#333" stroke-width="0.7"/><path d="M-2.45 10.80L7.55 0.80" stroke="#333" stroke-width="0.7"/><path d="M-1.30 10.80L8.70 0.80" stroke="#333" stroke-width="0.7"/><path d="M-0.15 10.80L9.85 0.80" stroke="#333" stroke-width="0.7"/><path d="M1.00 10.80L11.00 0.80" stroke="#333" stroke-width="0.7"/><path d="M2.15 10.80L12.15 0.80" stroke="#333" stroke-width="0.7"/><path d="M3.30 10.80L13.30 0.80" stroke="#333" stroke-width="0.7"/><path d="M4.45 10.80L14.45 0.80" stroke="#333" stroke-width="0.7"/><path d="M5.60 10.80L15.60 0.80" stroke="#333" stroke-width="0.7"/><path d="M-3.60 0.80L6.40 10.80" stroke="#444" stroke-width="0.55"/><path d="M-2.45 0.80L7.55 10.80" stroke="#444" stroke-width="0.55"/><path d="M-1.30 0.80L8.70 10.80" stroke="#444" stroke-width="0.55"/><path d="M-0.15 0.80L9.85 10.80" stroke="#444" stroke-width="0.55"/><path d="M1.00 0.80L11.00 10.80" stroke="#444" stroke-width="0.55"/><path d="M2.15 0.80L12.15 10.80" stroke="#444" stroke-width="0.55"/><path d="M3.30 0.80L13.30 10.80" stroke="#444" stroke-width="0.55"/><path d="M4.45 0.80L14.45 10.80" stroke="#444" stroke-width="0.55"/><path d="M5.60 0.80L15.60 10.80" stroke="#444" stroke-width="0.55"/></g></g>
<g transform="translate(417.00 26.20)" filter="url(#bl)"><g transform="translate(-0.6 0) scale(1.1 1.05)"><path d="M2.800 9.200c-2.200 0-2.800-2.600-0.800-3.400c-0.200-2 1.800-2.800 3-1.800c0.800-2.200 4-1.800 4.200 0.600c2.400 0.200 2.800 3.800 0.200 4.600z" fill="#fbfbfb" stroke="#a9a9a9" stroke-width="0.8"/></g><circle cx="6.200" cy="6.300" r="1.700" fill="#39b6f2"/><circle cx="6.200" cy="6.300" r="0.600" fill="#d8f0fc"/></g>
<g transform="translate(432.35 25.80)" filter="url(#bl)"><g transform="translate(-0.6 0) scale(1.1 1.05)"><path d="M2.800 9.200c-2.200 0-2.800-2.600-0.800-3.400c-0.200-2 1.800-2.800 3-1.800c0.800-2.200 4-1.800 4.200 0.600c2.400 0.200 2.800 3.800 0.200 4.600z" fill="#fbfbfb" stroke="#a9a9a9" stroke-width="0.8"/></g><path d="M6.200 4.200l2.800 3h-1.600v3.200h-2.400v-3.200h-1.600z" fill="#1ba1ee"/></g>
<g transform="translate(448.80 26.20)" filter="url(#bl)"><path d="M0.400 0.300h11.200v8l-2.600 2.800h-8.600z" fill="#3b1f7e"/><circle cx="6" cy="5.400" r="3.400" fill="#4b2f93" stroke="#d9d0f0" stroke-width="0.7"/><path d="M4.200 4h3.400l0.400 1.400-0.400 1.400h-3.400z M4.600 5.400h3" stroke="#efeaf8" stroke-width="0.6" fill="none"/></g>
<line x1="18.40" y1="41.50" x2="18.40" y2="396.00" stroke="#fafafa" stroke-width="0.8" />
<path d="M2.4 44.9h14" stroke="#c2c2c2" stroke-width="0.8" stroke-dasharray="0.8 1.3" fill="none"/>
<path d="M2.4 238.5h14" stroke="#c2c2c2" stroke-width="0.8" stroke-dasharray="0.8 1.3" fill="none"/>
<line x1="0.00" y1="233.00" x2="18.40" y2="233.00" stroke="#fbfbfb" stroke-width="0.8" />
<rect x="1" y="48.8" width="16.1" height="14.6" fill="#f8f8f8" stroke="#d0d0d0" stroke-width="0.7"/>
<path d="M1 63.4v-14.600h16.100" fill="none" stroke="#b8b8b8" stroke-width="0.7"/>
<g transform="translate(0.00 57.00)" filter="url(#bl)"><path d="M6.500 -4.300l6.200 5.800-2.800 0.200 1.500 3-1.400 0.650-1.500-3.100-2 1.900z" fill="#3a3a3a"/></g>
<rect x="13.700" y="50.30" width="1.300" height="1.300" fill="#222"/>
<text x="8.800" y="76.300" font-family="Liberation Serif, serif" font-size="14.5" fill="#303030" stroke="#303030" stroke-width="0.35" text-anchor="middle" filter="url(#bl)">T</text>
<rect x="13.700" y="65.30" width="1.300" height="1.300" fill="#222"/>
<g transform="translate(0.00 87.00)" filter="url(#bl)"><path d="M5 -5.200c3-1.600 6 0 5.400 2.400c-0.600 2.200-4.200 3.400-6 2c-1.400-1.200-0.800-3.400 0.600-4.400z" fill="none" stroke="#3a3a3a" stroke-width="1"/><path d="M5.600 -1.400l-1.800 5.200M8.600 -2.600l2.800 4" stroke="#3a3a3a" stroke-width="0.9"/><path d="M8.600 -0.600l2.800 1.400 1 3.200-1.600 1.800-2.600-0.600-0.800-2.600z" fill="#fff" stroke="#3a3a3a" stroke-width="0.9"/><path d="M8 3.400l3 1.800 1.200-1.200v1.600l-2.400 0.800z" fill="#111"/></g>
<rect x="13.700" y="80.30" width="1.300" height="1.300" fill="#222"/>
<g transform="translate(0.00 102.00)" filter="url(#bl)"><polygon points="8.80,-4.90 10.18,-1.30 14.03,-1.10 11.03,1.33 12.03,5.05 8.80,2.95 5.57,5.05 6.57,1.33 3.57,-1.10 7.42,-1.30" fill="#fafafa" stroke="#555" stroke-width="0.85"/></g>
<rect x="13.700" y="95.30" width="1.300" height="1.300" fill="#222"/>
<g transform="translate(0.00 117.00)" filter="url(#bl)"><path d="M6.600 -3.200l7 4.800-7.600 3.800 1.400-3.800z" fill="#3a3a3a"/><path d="M6.400 -2.600l-3 7.400" stroke="#3a3a3a" stroke-width="0.9"/><path d="M7 -3.600h5" stroke="#555" stroke-width="0.8"/><circle cx="6.600" cy="-3.400" r="1.500" fill="#ffd0d0" stroke="#e03030" stroke-width="0.7"/></g>
<rect x="13.700" y="110.30" width="1.300" height="1.300" fill="#222"/>
<g transform="translate(0.00 132.50)" filter="url(#bl)"><rect x="3.600" y="-4.400" width="10" height="9" fill="#dadada" stroke="#9a9a9a" stroke-width="0.6"/><path d="M5 -2.900h7.200l-7.200 5.900h7.400" fill="none" stroke="#1c1c1c" stroke-width="1.550"/></g>
<rect x="13.700" y="125.80" width="1.300" height="1.300" fill="#222"/>
<g transform="translate(0.00 147.00)" filter="url(#bl)"><path d="M3.500 -4.400h9.400v2.400c2.600 1 2.400 5-0.400 6.600c-2.400 1.200-4.800 0.400-5.600-2.200h-3.400z" fill="#fbfbfb" stroke="#858585" stroke-width="0.95"/></g>
<rect x="13.700" y="140.30" width="1.300" height="1.300" fill="#222"/>
<g transform="translate(0.00 163.00)" filter="url(#bl)"><rect x="5" y="-4.800" width="9" height="9.400" fill="#ffdede"/><rect x="6.300" y="-3.600" width="6.400" height="7" fill="#10f020" stroke="#146a1c" stroke-width="0.7"/><path d="M4.800 -5l1.500 1.400M14.200 -5l-1.500 1.400M4.800 4.800l1.500 -1.400M14.200 4.800l-1.500 -1.400" stroke="#ff2a2a" stroke-width="1"/></g>
<rect x="13.700" y="156.30" width="1.300" height="1.300" fill="#222"/>
<g transform="translate(0.00 178.00)" filter="url(#bl)"><rect x="3.400" y="-1.800" width="11.200" height="4.800" fill="#dcdcdc" stroke="#9a9a9a" stroke-width="0.7"/><rect x="3.800" y="-1.400" width="10.400" height="1.600" fill="#a8a8a8"/><path d="M5.400 0.400v1.800M7 0.400v1.200M8.600 0.400v1.800M10.200 0.400v1.200M11.800 0.400v1.800" stroke="#777" stroke-width="0.6"/></g>
<rect x="13.700" y="171.90" width="1.300" height="1.300" fill="#222"/>
<g transform="translate(0.00 193.00)" filter="url(#bl)"><path d="M4.400 4.400l6.400 -6.600" stroke="#555" stroke-width="2.400" stroke-linecap="round"/><path d="M4.600 4.200l5.600 -5.800" stroke="#f2f2f2" stroke-width="1.100" stroke-linecap="round"/><path d="M9.800 -2.800l2.800 2.600" stroke="#222" stroke-width="1.300"/><path d="M11.200 -2.400l2.200 -2.200" stroke="#222" stroke-width="2.600" stroke-linecap="round"/></g>
<g transform="translate(0.00 208.00)" filter="url(#bl)"><path d="M9 -5l3.200 0.800-5 9.400-3.200-0.800z" fill="#f6f6f6" stroke="#777" stroke-width="0.6"/><path d="M9 -5l3.200 0.800-1.400 2.600-3.200-0.800z" fill="#f0a51a"/><path d="M5.400 2.200l2.800 0.800-1 2.200-3.200-0.800z" fill="#ff6f7d"/></g>
<g transform="translate(0.00 223.00)" filter="url(#bl)"><circle cx="7.200" cy="1.400" r="3.800" fill="#f4f4f4" stroke="#777" stroke-width="0.8"/><path d="M3.600 2a3.700 3.700 0 0 0 7 1.400l-3.400-2.400z" fill="#ee2430"/><path d="M7 -5.200l6.600 8.400" stroke="#1c1c1c" stroke-width="1.600"/><path d="M4.800 -2.200q1.200-2.600 3-2.200" stroke="#666" stroke-width="0.8" fill="none"/></g>
<g transform="translate(0.00 250.60)" filter="url(#bl)"><circle cx="7.400" cy="-0.800" r="4.300" fill="#fdfdfd" stroke="#444" stroke-width="1.100"/><path d="M7.400 -3v2.200h1.800" stroke="#888" stroke-width="0.6" fill="none"/><path d="M10.600 2.600l3.200 3.400" stroke="#b07a45" stroke-width="1.900" stroke-linecap="round"/><path d="M10.400 2.200l1 1" stroke="#444" stroke-width="1.400"/><path d="M3.600 -5.400q-1 2 0 4" stroke="#333" stroke-width="0.9" fill="none"/><path d="M3 -5.800l1.800 0.200-1 1.400z" fill="#333"/></g>
<g transform="translate(0.00 265.60)" filter="url(#bl)"><circle cx="7.400" cy="-0.800" r="4.300" fill="#fdfdfd" stroke="#444" stroke-width="1.100"/><circle cx="7.400" cy="-0.800" r="1.500" fill="#222"/><path d="M5 -0.800h4.800M7.400 -3.200v4.800" stroke="#222" stroke-width="0.6"/><path d="M10.600 2.600l3.200 3.400" stroke="#b07a45" stroke-width="1.900" stroke-linecap="round"/><path d="M10.400 2.200l1 1" stroke="#444" stroke-width="1.400"/></g>
<g transform="translate(0.00 281.00)" filter="url(#bl)"><path d="M3.400 -5.600h6l2.600 2.400v8.600h-8.600z" fill="#f2f2f2" stroke="#8a8a8a" stroke-width="0.8"/><circle cx="9" cy="1.600" r="3.400" fill="#fdfdfd" stroke="#444" stroke-width="1"/><path d="M11.600 4.200l2.400 2" stroke="#b07a45" stroke-width="1.600" stroke-linecap="round"/></g>
<g transform="translate(0.00 295.60)" filter="url(#bl)"><circle cx="7.400" cy="-0.800" r="4.300" fill="#fdfdfd" stroke="#444" stroke-width="1.100"/><path d="M5.400 -0.800h4" stroke="#222" stroke-width="1.100"/><path d="M10.600 2.600l3.200 3.400" stroke="#b07a45" stroke-width="1.900" stroke-linecap="round"/><path d="M10.400 2.200l1 1" stroke="#444" stroke-width="1.400"/></g>
<g transform="translate(0.00 310.60)" filter="url(#bl)"><circle cx="10" cy="-2.800" r="2.800" fill="#e6efe6" stroke="#555" stroke-width="1"/><path d="M8.600 -3.400h3" stroke="#1c9a3a" stroke-width="1.300"/><circle cx="6.400" cy="0.800" r="3" fill="#e6efe6" stroke="#555" stroke-width="1"/><path d="M4.800 1.400h3" stroke="#1c9a3a" stroke-width="1.400"/><path d="M12 -0.600l2.200 2.400M8.600 3.200l2.200 2.600" stroke="#6d5842" stroke-width="1.500" stroke-linecap="round"/></g>
<g transform="translate(0.00 326.00)" filter="url(#bl)"><circle cx="7.400" cy="-0.800" r="4.300" fill="#fdfdfd" stroke="#444" stroke-width="1.100"/><circle cx="7.400" cy="-0.800" r="1.700" fill="#ff4a10"/><path d="M4.200 -0.800h6.400M7.400 -4v6.400" stroke="#ddd" stroke-width="0.5"/><path d="M10.600 2.600l3.200 3.400" stroke="#b07a45" stroke-width="1.900" stroke-linecap="round"/><path d="M10.400 2.200l1 1" stroke="#444" stroke-width="1.400"/></g>
<g transform="translate(0.00 341.00)" filter="url(#bl)"><circle cx="7.400" cy="-0.800" r="4.300" fill="#fdfdfd" stroke="#444" stroke-width="1.100"/><circle cx="8.200" cy="-0.200" r="1.700" fill="#ff5a20"/><path d="M5.800 -1.800l1.600-2.200 1.600 2.200z" fill="#14a040"/><path d="M10.600 2.600l3.200 3.400" stroke="#b07a45" stroke-width="1.900" stroke-linecap="round"/><path d="M10.400 2.200l1 1" stroke="#444" stroke-width="1.400"/></g>
<g transform="translate(0.00 356.00)" filter="url(#bl)"><circle cx="7.400" cy="-0.800" r="4.300" fill="#fdfdfd" stroke="#444" stroke-width="1.100"/><text x="7.400" y="0.800" font-size="4.400" font-weight="bold" text-anchor="middle" fill="#222">1:1</text><path d="M10.600 2.600l3.200 3.400" stroke="#b07a45" stroke-width="1.900" stroke-linecap="round"/><path d="M10.400 2.200l1 1" stroke="#444" stroke-width="1.400"/></g>
<g transform="translate(0.00 372.00)" filter="url(#bl)"><path d="M5.800 0.200v-3.600q0.800-0.800 1.400 0v-1.200q0.800-0.800 1.500 0v0.400q0.800-0.800 1.500 0v0.800q0.800-0.600 1.400 0.200v4.600q-0.200 2.200-1.600 3.400h-4.200l-3-4.400q0.400-1.200 1.600-0.400z" fill="#fcfcfc" stroke="#555" stroke-width="0.8"/><path d="M7.200 -3.200v3M8.700 -4v3.800M10.200 -3.200v3.200" stroke="#777" stroke-width="0.5"/></g>
<rect x="1" y="379.600" width="16.100" height="15.400" fill="#f8f8f8" stroke="#dcdcdc" stroke-width="0.7"/>
<path d="M1 395v-15.400h16.100" fill="none" stroke="#c4c4c4" stroke-width="0.7"/>
<radialGradient id="ball" cx="0.4" cy="0.350"><stop offset="0" stop-color="#8a8a8a"/><stop offset="0.5" stop-color="#333"/><stop offset="1" stop-color="#111"/></radialGradient>
<g transform="translate(0.00 387.40)" filter="url(#bl)"><circle cx="10.800" cy="-2.600" r="3.100" fill="url(#ball)"/><rect x="4.200" y="-2" width="7" height="7" fill="#fafafa" stroke="#444" stroke-width="0.8"/></g>
<rect x="2.9" y="506.9" width="7.4" height="7.9" fill="#fdfdfd"/>
<path d="M2.9 514.9h7.6000000000000005v-8" fill="none" stroke="#555" stroke-width="0.8"/>
<rect x="12" y="506.9" width="7.0" height="7.9" fill="#fdfdfd"/>
<path d="M12 514.9h7.2v-8" fill="none" stroke="#555" stroke-width="0.8"/>
<path d="M6.200 508.600v4.600l-2.500-2.300zM9.300 508.600v4.600l-2.500-2.300z" fill="#111"/><path d="M9.600 508.600v4.600" stroke="#111" stroke-width="0.6"/>
<path d="M16.600 508.600v4.600l-2.500-2.300z" fill="#111"/><path d="M17 508.600v4.600" stroke="#111" stroke-width="0.6"/>
<rect x="20.900" y="507.300" width="7" height="7.600" fill="#fff" stroke="#111" stroke-width="1"/>
<path d="M22.600 509.200l3.600 3.800M26.200 509.200l-3.600 3.800" stroke="#333" stroke-width="0.7"/>
<rect x="28.85" y="506.65" width="7.9" height="8.4" fill="#505050" fill-opacity="0.6"/>
<rect x="29.20" y="507.0" width="7.2" height="7.7" fill="#000000" />
<rect x="37.48" y="506.65" width="7.9" height="8.4" fill="#505050" fill-opacity="0.6"/>
<rect x="37.83" y="507.0" width="7.2" height="7.7" fill="#808080" />
<rect x="46.11" y="506.65" width="7.9" height="8.4" fill="#505050" fill-opacity="0.6"/>
<rect x="46.46" y="507.0" width="7.2" height="7.7" fill="#ffffff" />
<rect x="54.74" y="506.65" width="7.9" height="8.4" fill="#505050" fill-opacity="0.6"/>
<rect x="55.09" y="507.0" width="7.2" height="7.7" fill="#ff8080" />
<rect x="63.37" y="506.65" width="7.9" height="8.4" fill="#505050" fill-opacity="0.6"/>
<rect x="63.72" y="507.0" width="7.2" height="7.7" fill="#800000" />
<rect x="72.00" y="506.65" width="7.9" height="8.4" fill="#505050" fill-opacity="0.6"/>
<rect x="72.35" y="507.0" width="7.2" height="7.7" fill="#ff0000" />
<rect x="80.63" y="506.65" width="7.9" height="8.4" fill="#505050" fill-opacity="0.6"/>
<rect x="80.98" y="507.0" width="7.2" height="7.7" fill="#ff8000" />
<rect x="89.26" y="506.65" width="7.9" height="8.4" fill="#505050" fill-opacity="0.6"/>
<rect x="89.61" y="507.0" width="7.2" height="7.7" fill="#ffff80" />
<rect x="97.89" y="506.65" width="7.9" height="8.4" fill="#505050" fill-opacity="0.6"/>
<rect x="98.24" y="507.0" width="7.2" height="7.7" fill="#808000" />
<rect x="106.52" y="506.65" width="7.9" height="8.4" fill="#505050" fill-opacity="0.6"/>
<rect x="106.87" y="507.0" width="7.2" height="7.7" fill="#ffff00" />
<rect x="115.15" y="506.65" width="7.9" height="8.4" fill="#505050" fill-opacity="0.6"/>
<rect x="115.50" y="507.0" width="7.2" height="7.7" fill="#80ff00" />
<rect x="123.78" y="506.65" width="7.9" height="8.4" fill="#505050" fill-opacity="0.6"/>
<rect x="124.13" y="507.0" width="7.2" height="7.7" fill="#80ff80" />
<rect x="132.41" y="506.65" width="7.9" height="8.4" fill="#505050" fill-opacity="0.6"/>
<rect x="132.76" y="507.0" width="7.2" height="7.7" fill="#008000" />
<rect x="141.04" y="506.65" width="7.9" height="8.4" fill="#505050" fill-opacity="0.6"/>
<rect x="141.39" y="507.0" width="7.2" height="7.7" fill="#00ff00" />
<rect x="149.67" y="506.65" width="7.9" height="8.4" fill="#505050" fill-opacity="0.6"/>
<rect x="150.02" y="507.0" width="7.2" height="7.7" fill="#00ff80" />
<rect x="158.30" y="506.65" width="7.9" height="8.4" fill="#505050" fill-opacity="0.6"/>
<rect x="158.65" y="507.0" width="7.2" height="7.7" fill="#80ffff" />
<rect x="166.93" y="506.65" width="7.9" height="8.4" fill="#505050" fill-opacity="0.6"/>
<rect x="167.28" y="507.0" width="7.2" height="7.7" fill="#008080" />
<rect x="175.56" y="506.65" width="7.9" height="8.4" fill="#505050" fill-opacity="0.6"/>
<rect x="175.91" y="507.0" width="7.2" height="7.7" fill="#00ffff" />
<rect x="184.19" y="506.65" width="7.9" height="8.4" fill="#505050" fill-opacity="0.6"/>
<rect x="184.54" y="507.0" width="7.2" height="7.7" fill="#0080ff" />
<rect x="192.82" y="506.65" width="7.9" height="8.4" fill="#505050" fill-opacity="0.6"/>
<rect x="193.17" y="507.0" width="7.2" height="7.7" fill="#8080ff" />
<rect x="201.45" y="506.65" width="7.9" height="8.4" fill="#505050" fill-opacity="0.6"/>
<rect x="201.80" y="507.0" width="7.2" height="7.7" fill="#000080" />
<rect x="210.08" y="506.65" width="7.9" height="8.4" fill="#505050" fill-opacity="0.6"/>
<rect x="210.43" y="507.0" width="7.2" height="7.7" fill="#0000ff" />
<rect x="218.71" y="506.65" width="7.9" height="8.4" fill="#505050" fill-opacity="0.6"/>
<rect x="219.06" y="507.0" width="7.2" height="7.7" fill="#8000ff" />
<rect x="227.34" y="506.65" width="7.9" height="8.4" fill="#505050" fill-opacity="0.6"/>
<rect x="227.69" y="507.0" width="7.2" height="7.7" fill="#ff80ff" />
<rect x="235.97" y="506.65" width="7.9" height="8.4" fill="#505050" fill-opacity="0.6"/>
<rect x="236.32" y="507.0" width="7.2" height="7.7" fill="#800080" />
<rect x="244.60" y="506.65" width="7.9" height="8.4" fill="#505050" fill-opacity="0.6"/>
<rect x="244.95" y="507.0" width="7.2" height="7.7" fill="#ff00ff" />
<rect x="253.23" y="506.65" width="7.9" height="8.4" fill="#505050" fill-opacity="0.6"/>
<rect x="253.58" y="507.0" width="7.2" height="7.7" fill="#ff0080" />
<rect x="261.91" y="506.7" width="7.8" height="8.3" fill="#999" fill-opacity="0.6"/>
<g transform="translate(262.21 507.0)" filter="url(#bl)"><rect width="7.2" height="7.7" fill="#7c7c7c"/><rect x="4.200" y="1" width="2.800" height="2.800" fill="#d8d8d8"/><rect x="5.200" y="1.700" width="1.200" height="1.400" fill="#333"/></g>
<rect x="270.54" y="506.7" width="7.8" height="8.3" fill="#999" fill-opacity="0.6"/>
<g transform="translate(270.84 507.0)" filter="url(#bl)"><rect width="7.2" height="7.7" fill="#868686"/><rect x="4.200" y="1" width="2.800" height="2.800" fill="#d8d8d8"/><rect x="5.200" y="1.700" width="1.200" height="1.400" fill="#333"/></g>
<rect x="279.17" y="506.7" width="7.8" height="8.3" fill="#999" fill-opacity="0.6"/>
<g transform="translate(279.47 507.0)" filter="url(#bl)"><rect width="7.2" height="7.7" fill="#8e8e8e"/><rect x="4.200" y="1" width="2.800" height="2.800" fill="#d8d8d8"/><rect x="5.200" y="1.700" width="1.200" height="1.400" fill="#333"/></g>
<rect x="287.80" y="506.7" width="7.8" height="8.3" fill="#999" fill-opacity="0.6"/>
<g transform="translate(288.10 507.0)" filter="url(#bl)"><rect width="7.2" height="7.7" fill="#969696"/><rect x="4.200" y="1" width="2.800" height="2.800" fill="#d8d8d8"/><rect x="5.200" y="1.700" width="1.200" height="1.400" fill="#333"/></g>
<rect x="296.43" y="506.7" width="7.8" height="8.3" fill="#999" fill-opacity="0.6"/>
<g transform="translate(296.73 507.0)" filter="url(#bl)"><rect width="7.2" height="7.7" fill="#9c9c9c"/><rect x="4.200" y="1" width="2.800" height="2.800" fill="#d8d8d8"/><rect x="5.200" y="1.700" width="1.200" height="1.400" fill="#333"/></g>
<rect x="305.06" y="506.7" width="7.8" height="8.3" fill="#bbb" fill-opacity="0.6"/>
<g transform="translate(305.36 507.0)" filter="url(#bl)"><rect width="7.2" height="7.7" fill="#f6f6f6"/><rect x="5" y="1.500" width="1.500" height="1.600" fill="#333"/></g>
<rect x="313.69" y="506.7" width="7.8" height="8.3" fill="#bbb" fill-opacity="0.6"/>
<g transform="translate(313.99 507.0)" filter="url(#bl)"><rect width="7.2" height="7.7" fill="#f6f6f6"/><rect x="5" y="1.500" width="1.500" height="1.600" fill="#333"/></g>
<g transform="translate(322.62 507.0)" filter="url(#bl)"><rect width="7.2" height="7.7" fill="#c9c9c9"/><path d="M0 7.7L7.2 0L7.2 7.7z" fill="#fff"/><path d="M0 7.7L7.2 0" stroke="#666" stroke-width="0.8"/></g>
<g transform="translate(331.25 507.0)" filter="url(#bl)"><rect width="7.2" height="7.7" fill="#d21a1a"/><rect x="1.200" y="2" width="5.400" height="1.300" fill="#fff"/><rect x="1.200" y="4.400" width="5.400" height="1.300" fill="#fff"/></g>
<g transform="translate(339.88 507.0)" filter="url(#bl)"><rect width="7.2" height="7.7" fill="#1440c8"/><path d="M3.900 0.800l2.600 2v3.600h-5.200v-3.600z" fill="#fff"/></g>
<g transform="translate(348.51 507.0)" filter="url(#bl)"><rect width="7.2" height="7.7" fill="#d8d850"/><path d="M3.900 0.200l3.400 1.800v3.600l-3.400 1.800l-3.400-1.800v-3.600z" fill="#ffff00"/></g>
<g transform="translate(357.14 507.0)" filter="url(#bl)"><rect width="7.2" height="7.7" fill="#111"/><path d="M3.900 0.600l3.300 3.200-3.300 3.200-3.300-3.200z" fill="#fff"/><circle cx="3.900" cy="3.800" r="1" fill="#111"/></g>
<g transform="translate(365.77 507.0)" filter="url(#bl)"><rect width="7.2" height="7.7" fill="#bbb"/><path d="M0.400 0.600l3.500 3.200-3.500 3.200z" fill="#fff"/><path d="M6.8 0.600l-3.500 3.200 3.500 3.200z" fill="#fff"/><path d="M0.400 0.600l7 6.400M7.400 0.600l-7 6.400" stroke="#555" stroke-width="0.5"/></g>
<g transform="translate(374.40 507.0)" filter="url(#bl)"><rect width="7.2" height="7.7" fill="#1030d0"/><polygon points="3.90,0.40 4.84,2.81 7.42,2.96 5.42,4.59 6.07,7.09 3.90,5.70 1.73,7.09 2.38,4.59 0.38,2.96 2.96,2.81" fill="#fff200"/></g>
<g transform="translate(383.03 507.0)" filter="url(#bl)"><rect width="7.2" height="7.7" fill="#10c8ee"/><path d="M1 1q3 1 3 5M3 0.500q3 1.500 3 6M0.500 4q1.500 0.500 1.500 3" stroke="#0a58c8" stroke-width="0.9" fill="none"/></g>
<defs><radialGradient id="g42"><stop offset="0" stop-color="#c8c8ff"/><stop offset="0.35" stop-color="#7070ff"/><stop offset="0.7" stop-color="#1010e8"/><stop offset="1" stop-color="#0808d0"/></radialGradient><radialGradient id="g43"><stop offset="0" stop-color="#ff5050"/><stop offset="0.45" stop-color="#ff7070"/><stop offset="0.6" stop-color="#f4e4e4"/><stop offset="1" stop-color="#e8e8e8"/></radialGradient><linearGradient id="g46"><stop offset="0" stop-color="#f4f4f4"/><stop offset="0.25" stop-color="#c0c0c0"/><stop offset="0.7" stop-color="#444"/><stop offset="1" stop-color="#111"/></linearGradient><radialGradient id="g47"><stop offset="0" stop-color="#d8ffd8"/><stop offset="0.4" stop-color="#30f030"/><stop offset="1" stop-color="#00d800"/></radialGradient><linearGradient id="g48"><stop offset="0" stop-color="#a00000"/><stop offset="0.2" stop-color="#ff2000"/><stop offset="0.4" stop-color="#ffe000"/><stop offset="0.6" stop-color="#20d020"/><stop offset="0.8" stop-color="#2060ff"/><stop offset="1" stop-color="#3010a0"/></linearGradient><radialGradient id="g49"><stop offset="0" stop-color="#ffe0e0"/><stop offset="0.35" stop-color="#ff4040"/><stop offset="1" stop-color="#e80000"/></radialGradient><linearGradient id="g50"><stop offset="0" stop-color="#20c8c8"/><stop offset="0.4" stop-color="#0a8aa0"/><stop offset="1" stop-color="#061860"/></linearGradient></defs>
<g transform="translate(391.66 507.0)" filter="url(#bl)"><rect width="7.2" height="7.7" fill="url(#g42)"/></g>
<g transform="translate(400.29 507.0)" filter="url(#bl)"><rect width="7.2" height="7.7" fill="url(#g43)" stroke="#999" stroke-width="0.5"/></g>
<g transform="translate(408.92 507.0)" filter="url(#bl)"><rect width="7.2" height="7.7" fill="#a8d0f8"/><rect x="1.200" width="1.300" height="7.7" fill="#5088d8"/><rect x="3.600" width="1.300" height="7.7" fill="#e8f4ff"/><rect x="6" width="1.200" height="7.7" fill="#5088d8"/></g>
<g transform="translate(417.55 507.0)" filter="url(#bl)"><rect width="7.2" height="7.7" fill="#3a78d8"/><path d="M0.400 0.800l3.200 3-3.200 3z" fill="#b8a030"/><path d="M6.8 0.800l-3.200 3 3.200 3z" fill="#a8d0f8"/><rect x="3.400" y="0" width="1.200" height="7.7" fill="#6a7a60"/></g>
<g transform="translate(426.18 507.0)" filter="url(#bl)"><rect width="7.2" height="7.7" fill="url(#g46)"/></g>
<g transform="translate(434.81 507.0)" filter="url(#bl)"><rect width="7.2" height="7.7" fill="url(#g47)"/></g>
<g transform="translate(443.44 507.0)" filter="url(#bl)"><rect width="7.2" height="7.7" fill="url(#g48)"/></g>
<g transform="translate(452.07 507.0)" filter="url(#bl)"><rect width="7.2" height="7.7" fill="url(#g49)"/></g>
<g transform="translate(460.70 507.0)" filter="url(#bl)"><rect width="7.2" height="7.7" fill="url(#g50)"/></g>
<rect x="470.5" y="506.9" width="7.0" height="7.9" fill="#fdfdfd"/>
<path d="M470.5 514.9h7.2v-8" fill="none" stroke="#555" stroke-width="0.8"/>
<rect x="478.8" y="506.9" width="7.6" height="7.9" fill="#fdfdfd"/>
<path d="M478.8 514.9h7.8v-8" fill="none" stroke="#555" stroke-width="0.8"/>
<path d="M472.800 508.600v4.600l2.500-2.300z" fill="#111"/><path d="M472.400 508.600v4.600" stroke="#111" stroke-width="0.6"/>
<path d="M480.200 508.600v4.600l2.500-2.300zM483.300 508.600v4.600l2.500-2.300z" fill="#111"/>
</svg>
</body></html>
